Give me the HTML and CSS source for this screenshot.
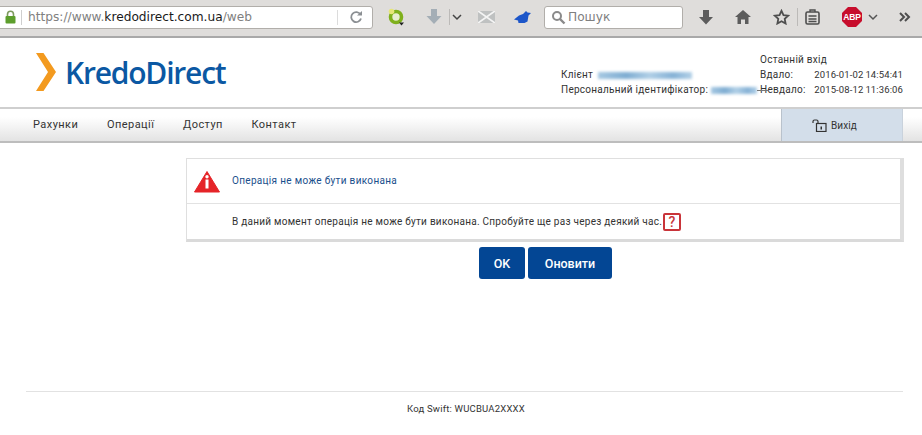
FILE: index.html
```html
<!DOCTYPE html>
<html lang="uk">
<head>
<meta charset="utf-8">
<title>KredoDirect</title>
<link rel="stylesheet" href="styles.css">
</head>
<body>
<div class="toolbar">
  <div class="urlbar">
    <svg class="lock" width="13" height="14" viewBox="0 0 13 14"><path d="M3.500 6V4.200a3 3 0 0 1 6 0V6" fill="none" stroke="#7d9a5e" stroke-width="1.600"/><rect x="1.500" y="6" width="10" height="7.500" rx="1" fill="#5d9e2c"/></svg>
    <span class="urlsep"></span>
    <span class="url">https://www.<b>kredodirect.com.ua</b>/web</span>
    <span class="reload-sep"></span>
    <svg class="reload" width="14" height="14" viewBox="0 0 14 14"><path d="M11.500 4.500A5 5 0 1 0 12 8.500" fill="none" stroke="#8b8f93" stroke-width="1.800"/><path d="M8 5.500h5V1z" fill="#8b8f93"/></svg>
  </div>
  <svg class="t-green" width="20" height="20" viewBox="0 0 20 20"><circle cx="10" cy="10" r="5.500" fill="#e8eed0" stroke="#7fb01c" stroke-width="3.600"/><circle cx="5.500" cy="4.500" r="2.800" fill="#e6e678"/><path d="M13 15.500h5l-2.500 3z" fill="#222"/></svg>
  <svg class="t-dl" width="18" height="18" viewBox="0 0 18 18"><path d="M6 1h6v7h4.500L9 16 1.500 8H6z" fill="#a4aeb6"/></svg>
  <span class="t-sep"></span>
  <svg class="t-chev" width="10" height="8" viewBox="0 0 10 8"><path d="M1 2l4 4 4-4" fill="none" stroke="#444" stroke-width="1.500"/></svg>
  <svg class="t-mail" width="17" height="12" viewBox="0 0 17 12"><rect width="17" height="12" fill="#bfc1c1"/><path d="M0 0l17 12M17 0L0 12" stroke="#f4f4f4" stroke-width="1.800"/></svg>
  <svg class="t-bird" width="18" height="14" viewBox="0 0 18 14"><path d="M0 9.500l5-4 4-1.500 3-3 1.500 1.500 3.500.5-2.500 2.500-1 6-3 1.500H4.500L4 10.500z" fill="#1d56c9"/></svg>
  <div class="search">
    <svg width="15" height="15" viewBox="0 0 15 15"><circle cx="6" cy="6" r="4" fill="none" stroke="#8a8a8a" stroke-width="2"/><path d="M9 9l4.500 4.500" stroke="#8a8a8a" stroke-width="2.400"/></svg>
    <span>Пошук</span>
  </div>
  <svg class="t-down" width="16" height="16" viewBox="0 0 16 16"><path d="M5 1h6v7h4l-7 7.500L1 8h4z" fill="#5c5c5c"/></svg>
  <svg class="t-home" width="18" height="16" viewBox="0 0 18 16"><path d="M9 1L1 8h2.500v7H7v-4.500h4V15h3.500V8H17z" fill="#5c5c5c"/></svg>
  <svg class="t-star" width="17" height="16" viewBox="0 0 17 16"><path d="M8.500 1.800l2 4.300 4.700.6-3.500 3.200.9 4.600-4.100-2.300-4.100 2.300.9-4.600-3.500-3.200 4.700-.6z" fill="none" stroke="#4e4e4e" stroke-width="1.800"/></svg>
  <span class="t-sep t-sep2"></span>
  <svg class="t-clip" width="15" height="16" viewBox="0 0 15 16"><rect x="1" y="3" width="13" height="12" rx="1.500" fill="none" stroke="#4e4e4e" stroke-width="1.600"/><path d="M5 3V1h5v2M3.500 7h8M3.500 10h8M3.500 12.500h8" stroke="#4e4e4e" stroke-width="1.400" fill="none"/></svg>
  <span class="abp">ABP</span>
  <svg class="t-chev2" width="10" height="8" viewBox="0 0 10 8"><path d="M1 2l4 4 4-4" fill="none" stroke="#555" stroke-width="1.500"/></svg>
  <svg class="t-more" width="12" height="10" viewBox="0 0 12 10"><path d="M1 1l4 4-4 4M6 1l4 4-4 4" fill="none" stroke="#4e4e4e" stroke-width="2"/></svg>
</div>

<header class="head">
  <div class="logo">
    <svg width="20" height="38" viewBox="0 0 20 38"><path d="M0 0h7.500L20 19 7.500 38H0l12-19z" fill="#f39a1f"/></svg>
    <span class="logo-text">KredoDirect</span>
  </div>
  <div class="info">
    <div class="client">
      <div>Клієнт<span class="blur blur1"></span></div>
      <div>Персональний ідентифікатор:<span class="blur blur2"></span></div>
    </div>
    <div class="login">
      <div>Останній вхід</div>
      <div class="login-row"><span>Вдало:</span><span class="date">2016-01-02 14:54:41</span></div>
      <div class="login-row login-row-struck"><span>Невдало:</span><span class="date">2015-08-12 11:36:06</span></div>
    </div>
  </div>
</header>

<nav class="nav">
  <a class="nav-item">Рахунки</a>
  <a class="nav-item">Операції</a>
  <a class="nav-item">Доступ</a>
  <a class="nav-item">Контакт</a>
  <a class="logout">
    <svg width="15" height="13" viewBox="0 0 15 13"><path d="M1 4V2.500A1.500 1.500 0 0 1 2.500 1h2A1.500 1.500 0 0 1 6 2.500V4" fill="none" stroke="#333" stroke-width="1.200"/><rect x="4.500" y="4.500" width="9.500" height="8" fill="none" stroke="#333" stroke-width="1.200"/><rect x="8.500" y="7.500" width="1.500" height="3" fill="#333"/></svg>
    <span>Вихід</span>
  </a>
</nav>

<main class="main">
  <section class="card">
    <div class="card-head">
      <svg class="warn" width="26" height="23" viewBox="0 0 26 23"><path d="M13 1.500L25.500 22H.5z" fill="#e52428" stroke="#e52428" stroke-linejoin="round"/><rect x="11.500" y="9.500" width="3" height="9" fill="#fff"/><circle cx="13" cy="6.800" r="1.700" fill="#fff"/></svg>
      <span class="card-title">Операція не може бути виконана</span>
    </div>
    <div class="card-body">
      <span>В даний момент операція не може бути виконана. Спробуйте ще раз через деякий час.</span>
      <span class="help">?</span>
    </div>
  </section>
  <div class="buttons">
    <button class="btn btn-ok">OK</button>
    <button class="btn btn-refresh">Оновити</button>
  </div>
</main>

<footer class="foot">Код Swift: WUCBUA2XXXX</footer>
</body>
</html>
```
FILE: styles.css
```css
* { box-sizing: border-box; }
html, body { margin: 0; height: 435px; overflow: hidden; background: #fff; }
body { font-family: Roboto, "Open Sans", sans-serif; font-size: 10px; color: #333; letter-spacing: .26px; }
svg { display: block; flex: none; }

.toolbar { height: 38px; display: flex; align-items: center; background: #dfdddb; border-bottom: 2px solid #a9a9a9; padding-bottom: 2px; font-family: "DejaVu Sans", sans-serif; letter-spacing: 0; }
.urlbar { width: 375px; height: 23px; margin-left: -2px; display: flex; align-items: center; background: #fff; border: 1px solid #b1aeaa; border-radius: 0 3px 3px 0; padding-left: 5px; }
.urlsep { width: 1px; height: 15px; background: #cfcfcf; margin: 0 6px 0 4px; }
.url { font-size: 12.200px; color: #808080; flex: 1; white-space: nowrap; }
.url b { font-weight: 400; color: #1a1a1a; }
.reload-sep { width: 1px; height: 15px; background: #dcdcdc; }
.reload { margin: 0 9px 0 11px; }
.t-green { margin-left: 13px; }
.t-dl { margin-left: 19px; }
.t-sep { width: 1px; height: 16px; background: #bcbab8; margin-left: 6px; }
.t-chev { margin-left: 2px; }
.t-mail { margin-left: 16px; }
.t-bird { margin-left: 19px; }
.search { width: 139px; height: 23px; margin-left: 12px; display: flex; align-items: center; gap: 2px; background: #fff; border: 1px solid #b1aeaa; border-radius: 3px; padding-left: 6px; font-size: 12.200px; color: #808080; }
.t-down { margin-left: 15px; }
.t-home { margin-left: 20px; }
.t-star { margin-left: 21px; }
.t-sep2 { height: 18px; margin-left: 7px; }
.t-clip { margin-left: 7px; }
.abp { width: 20px; height: 20px; margin-left: 22px; display: flex; align-items: center; justify-content: center; clip-path: polygon(30% 0, 70% 0, 100% 30%, 100% 70%, 70% 100%, 30% 100%, 0 70%, 0 30%); background: #c70d2c; color: #fff; font: 700 8.500px "Liberation Sans", sans-serif; letter-spacing: -.2px; }
.t-chev2 { margin-left: 6px; }
.t-more { margin-left: 21px; }

.head { height: 69px; display: flex; justify-content: space-between; padding: 14px 19px 0 36px; }
.logo { display: flex; align-items: center; gap: 9px; height: 40px; }
.logo-text { font-family: "Open Sans", sans-serif; font-size: 30px; font-weight: 600; color: #0b58a3; letter-spacing: -1.200px; line-height: 1; padding-top: 2px; }
.info { display: flex; align-items: flex-end; padding-bottom: 10px; line-height: 15px; white-space: nowrap; }
.client { width: 199px; }
.blur { display: inline-block; height: 7px; vertical-align: middle; background: linear-gradient(90deg, #a6c8e2, #7fadd2 30%, #b0cfe6 55%, #86b2d6 80%, #b2d0e7); filter: blur(1.500px); }
.blur1 { width: 94px; margin-left: 5px; }
.blur2 { width: 46px; margin-left: 3px; }
.login { width: 143px; }
.login-row { display: flex; justify-content: space-between; }
.login-row-struck { position: relative; }
.login-row-struck::before { content: ""; position: absolute; left: -3px; top: 8px; width: 11px; height: 1px; background: #777; }
.date { font-size: 9.500px; letter-spacing: .12px; word-spacing: -.5px; }

.nav { height: 36px; display: flex; padding-left: 33px; border-top: 2px solid #cfcfcf; border-bottom: 2px solid #bdbdbd; background: linear-gradient(#fff 25%, #e3e3e3); font-size: 11px; color: #333; line-height: 31px; letter-spacing: .45px; }
.nav-item { margin-right: 28.600px; }
.logout { width: 122px; margin-left: auto; margin-right: 19px; display: flex; align-items: center; justify-content: center; gap: 4px; background: #d3deea; border-left: 1px solid #b9c2cc; border-right: 1px solid #c9d2dc; font-size: 10px; letter-spacing: .1px; padding-right: 15px; }

.main { padding: 15px 0 0 186px; }
.card { width: 718px; height: 84px; background: #fff; border: 1px solid #dfdfdf; border-right: 4px solid #dedede; border-bottom: 3px solid #dadada; }
.card-head { height: 45px; display: flex; align-items: center; padding-left: 7px; gap: 12px; border-bottom: 1px solid #e2e2e2; }
.card-title { color: #1a4f8c; padding-bottom: 2px; letter-spacing: .32px; }
.card-body { display: flex; align-items: center; height: 35px; padding-left: 45px; gap: 1px; }
.help { width: 18px; height: 18px; display: flex; align-items: center; justify-content: center; border: 2px solid #c9343a; border-radius: 2px; color: #c9343a; font-weight: 500; font-size: 14px; }
.buttons { display: flex; justify-content: center; gap: 3px; width: 719px; margin-top: 5px; }
.btn { height: 32px; border: 0; border-radius: 3px; background: #034694; color: #fff; font: 500 12.500px Roboto, sans-serif; }
.btn-ok { width: 46px; }
.btn-refresh { width: 84px; }

.foot { position: absolute; left: 26px; right: 19px; top: 391px; height: 36px; padding-left: 3px; border-top: 1px solid #e2e2e2; font-size: 9.500px; letter-spacing: .2px; text-align: center; line-height: 33px; }
```
